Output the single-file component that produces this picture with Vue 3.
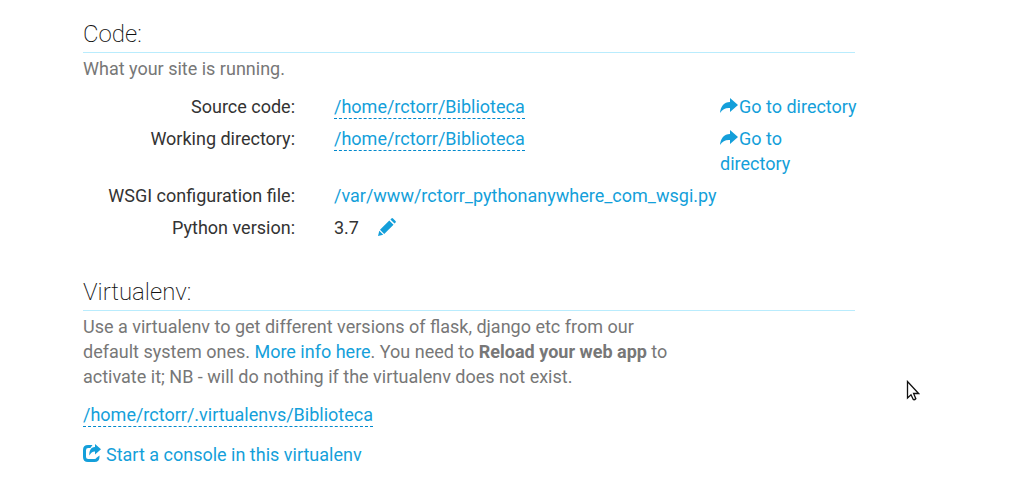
<script setup>
const sourcePath = '/home/rctorr/Biblioteca'
const workingPath = '/home/rctorr/Biblioteca'
const wsgiFile = '/var/www/rctorr_pythonanywhere_com_wsgi.py'
const virtualenvPath = '/home/rctorr/.virtualenvs/Biblioteca'
</script>

<template>
  <main class="page">
    <section>
      <h2>Code:</h2>
      <p class="help">What your site is running.</p>
      <div class="settings">
        <div class="row">
          <span class="label">Source code:</span>
          <span class="value"><a class="editable" href="#source">{{ sourcePath }}</a></span>
          <a class="single" href="#browse-source"><svg class="icon share" viewBox="0 0 18 15" aria-hidden="true"><path d="M10 0 L18 7 L10 14 V10 C5.5 9.6 2.6 11.2 0 15 C.6 8.4 4 4.2 10 4 Z" /></svg>Go to directory</a>
        </div>
        <div class="row">
          <span class="label">Working directory:</span>
          <span class="value"><a class="editable" href="#working">{{ workingPath }}</a></span>
          <a href="#browse-working"><svg class="icon share" viewBox="0 0 18 15" aria-hidden="true"><path d="M10 0 L18 7 L10 14 V10 C5.5 9.6 2.6 11.2 0 15 C.6 8.4 4 4.2 10 4 Z" /></svg>Go to directory</a>
        </div>
        <div class="row">
          <span class="label">WSGI configuration file:</span>
          <span class="value"><a href="#wsgi">{{ wsgiFile }}</a></span>
        </div>
        <div class="row">
          <span class="label">Python version:</span>
          <span class="value">3.7<button class="edit" type="button" aria-label="Edit Python version"><svg class="icon" viewBox="0 0 18 18" aria-hidden="true"><path d="M0 18 L1.3 12.8 L5.2 16.7 Z M2 11.8 L11.3 2.5 L15.5 6.7 L6.2 16 Z M12.4 1.5 L13.4 .5 Q14.2 -.3 15 .5 L17.5 3 Q18.3 3.8 17.5 4.6 L16.5 5.6 Z" /></svg></button></span>
        </div>
      </div>
    </section>

    <section>
      <h2>Virtualenv:</h2>
      <p class="help">
        Use a virtualenv to get different versions of flask, django etc from our default system ones.
        <a href="#help">More info here</a>. You need to <b>Reload your web app</b> to activate it; NB - will do nothing if the virtualenv does not exist.
      </p>
      <p class="path"><a class="editable" href="#virtualenv">{{ virtualenvPath }}</a></p>
      <p class="console">
        <a href="#console"><svg class="icon launch" viewBox="0 0 18 18" aria-hidden="true"><path d="M9.5 1 H5 Q0 1 0 6 V13 Q0 18 5 18 H11.5 Q16.5 18 16.5 13 V11.5 L13.5 13.8 Q13.3 15 11.2 15 H5.2 Q3 15 3 13 V6.2 Q3 4 5.2 4 H7.4 Z" /><path d="M12 0 L18 5.2 L12 10.4 V7.6 C9.4 7.5 8 8.8 6.4 11.6 C6 7 7.6 3 12 2.9 Z" /></svg>Start a console in this virtualenv</a>
      </p>
    </section>

    <svg class="pointer" viewBox="0 0 14 22" aria-hidden="true"><path d="M1.5 1.5 V18 L5 14.8 L7.3 19.5 Q8.3 20.2 9.8 18.7 L7.6 13.5 H12.6 Z" /></svg>
  </main>
</template>

<style>
body {
  margin: 0;
  background: #fff;
}
</style>

<style scoped>
.page {
  position: relative;
  padding: 18px 155px 24px 83px;
  font: 18px/25px Roboto, "Liberation Sans", sans-serif;
  color: #333;
}

h2 {
  margin: 0 0 3px;
  padding-bottom: 2px;
  border-bottom: 1px solid #b9ecfd;
  font-size: 24px;
  line-height: 32px;
  font-weight: 200;
  color: #111;
}

a {
  color: #149fda;
  text-decoration: none;
}

.help {
  max-width: 600px;
  margin: 0;
  color: #777;
}

.settings {
  display: grid;
  gap: 7px;
  margin: 13px 0 36px;
}

.row {
  display: grid;
  grid-template-columns: 212px 1fr 135px;
}

.label {
  text-align: right;
}

.value {
  padding-left: 39px;
}

.editable {
  padding-bottom: 1px;
  border-bottom: 1px dashed #0088cc;
}

.single {
  white-space: nowrap;
}

.icon {
  width: 18px;
  height: 18px;
  fill: currentColor;
}

.share {
  height: 15px;
  margin-right: 1px;
}

.edit {
  margin: 0 0 0 19px;
  padding: 0;
  border: 0;
  background: none;
  color: #149fda;
  line-height: 18px;
  vertical-align: -2px;
  cursor: pointer;
}

.edit .icon {
  display: block;
}

.path {
  margin: 13px 0 0;
}

.console {
  margin: 15px 0 0;
}

.launch {
  margin-right: 5px;
  vertical-align: -1px;
}

.pointer {
  position: absolute;
  left: 906px;
  top: 380px;
  width: 14px;
  height: 22px;
  fill: #fff;
  stroke: #111;
  stroke-width: 1.3;
}
</style>
